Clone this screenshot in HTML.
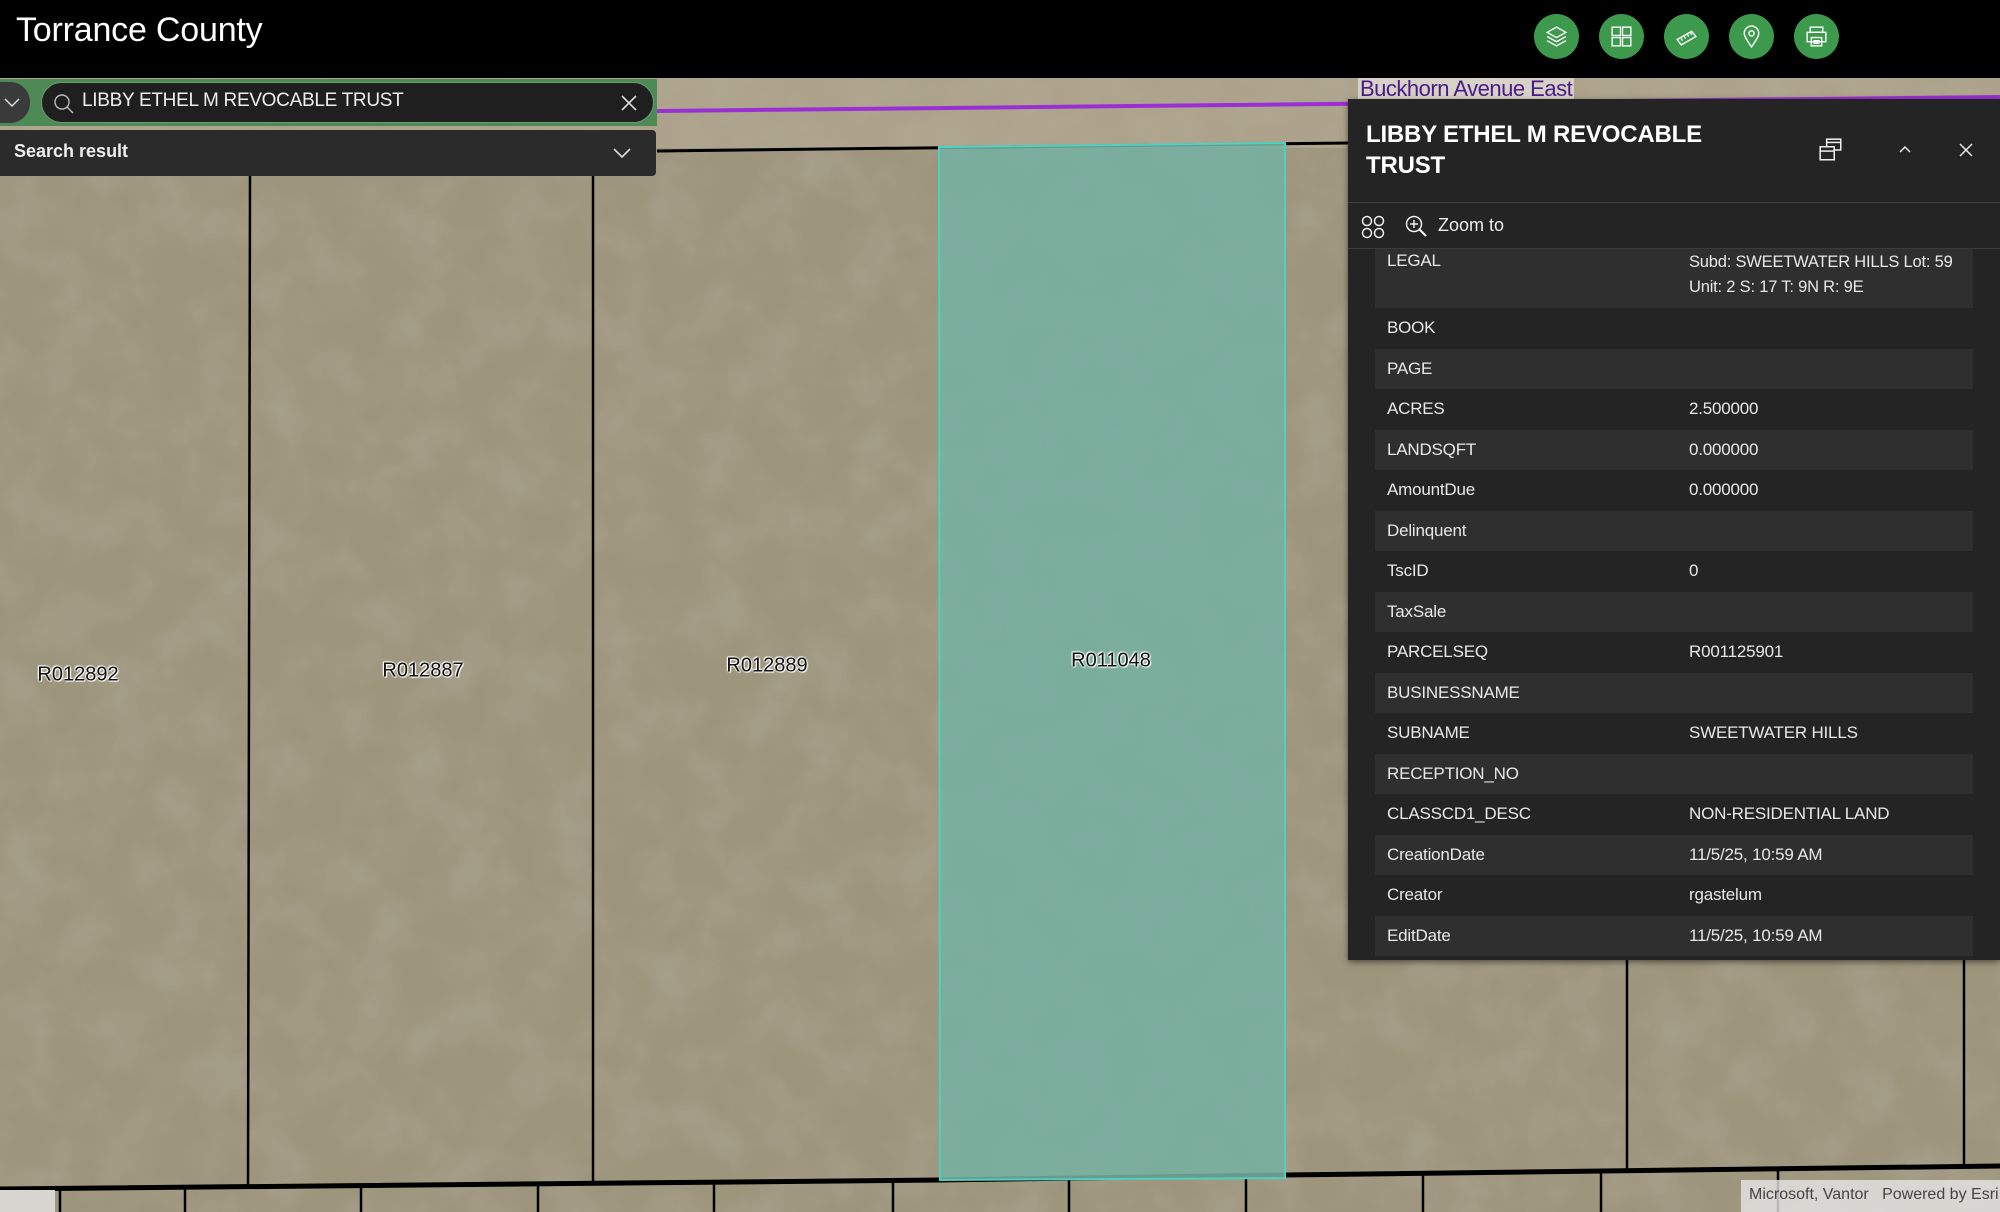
<!DOCTYPE html>
<html><head><meta charset="utf-8">
<style>
*{margin:0;padding:0;box-sizing:border-box}
body{width:2000px;height:1212px;overflow:hidden;position:relative;background:#9e957d;font-family:"Liberation Sans",sans-serif}
.abs{position:absolute}
#hdr{left:0;top:0;width:2000px;height:78px;background:#000}
#title{left:16px;top:11px;color:#fff;font-size:34px;letter-spacing:-0.2px}
.ic{position:absolute;top:14px;width:45px;height:45px;border-radius:50%;background:#3d9a4c}
.ic svg{position:absolute;left:10px;top:10px}
.lbl{position:absolute;font-size:20px;color:#111;text-shadow:0 0 2px #fff,0 0 2px #fff,1px 1px 1px #fff,-1px -1px 1px #fff;transform:translate(-50%,-50%)}
#panel{left:1348px;top:99px;width:652px;height:861px;background:#242424;overflow:hidden;box-shadow:0 2px 6px rgba(0,0,0,.5)}
.row{position:absolute;left:27px;width:598px;height:40.5px;color:#e8e8e8;font-size:17px;letter-spacing:-0.2px}
.row.s{background:#2f2f2f}
.row .k{position:absolute;left:12px;top:10px}
.row .v{position:absolute;left:314px;top:10px;white-space:nowrap}
</style></head><body>
<svg class="abs" style="left:0;top:0" width="2000" height="1212">
<defs>
<filter id="n"><feTurbulence type="fractalNoise" baseFrequency="0.02" numOctaves="3" seed="3"/><feColorMatrix values="0 0 0 0 0.45  0 0 0 0 0.43  0 0 0 0 0.35  0 0 0 1.2 -0.45"/></filter>
</defs>
<rect x="0" y="78" width="2000" height="1134" fill="#9e957d"/>
<rect x="0" y="78" width="2000" height="1134" filter="url(#n)" opacity="0.6"/>
<rect x="0" y="78" width="2000" height="70" fill="#b7ad96" opacity="0.6"/>
<polyline points="0,1189 940,1180 1285,1175 2000,1166" stroke="#000" stroke-width="5" fill="none"/>
<line x1="657" y1="151" x2="1348" y2="143" stroke="#000" stroke-width="3"/>
<line x1="657" y1="111" x2="2000" y2="97" stroke="#9b2fd6" stroke-width="4"/>
<g stroke="#000" stroke-width="2.5">
<line x1="250" y1="176" x2="248" y2="1188"/>
<line x1="593" y1="176" x2="593" y2="1184"/>
<line x1="1627" y1="960" x2="1627" y2="1172"/>
<line x1="1964" y1="960" x2="1964" y2="1168"/>
<line x1="60" y1="1189" x2="60" y2="1212"/><line x1="185" y1="1188" x2="185" y2="1212"/>
<line x1="361" y1="1186" x2="361" y2="1212"/><line x1="538" y1="1184" x2="538" y2="1212"/>
<line x1="714" y1="1182" x2="714" y2="1212"/><line x1="893" y1="1181" x2="893" y2="1212"/>
<line x1="1069" y1="1179" x2="1069" y2="1212"/><line x1="1246" y1="1176" x2="1246" y2="1212"/>
<line x1="1423" y1="1174" x2="1423" y2="1212"/><line x1="1601" y1="1172" x2="1601" y2="1212"/>
<line x1="1778" y1="1170" x2="1778" y2="1212"/>
</g>
<rect x="0" y="1190" width="55" height="22" fill="#d8d6d0"/>
<path d="M939,147 L1285,143 L1285,1178 L940,1180 Z" fill="#76b0a2" fill-opacity="0.88" stroke="#4fd0c0" stroke-width="2"/>
</svg>
<div class="lbl" style="left:78px;top:675px">R012892</div>
<div class="lbl" style="left:423px;top:671px">R012887</div>
<div class="lbl" style="left:767px;top:666px">R012889</div>
<div class="lbl" style="left:1111px;top:661px">R011048</div>
<div class="abs" style="left:1358px;top:76px;font-size:22px;color:#4a1a8a;background:rgba(255,255,255,.5);padding:0 2px;letter-spacing:-0.5px">Buckhorn Avenue East</div>

<div id="hdr" class="abs"></div>
<div id="title" class="abs">Torrance County</div>
<div class="ic" style="left:1534px"><svg width="25" height="25" viewBox="0 0 24 24" fill="none" stroke="#fff" stroke-width="1.3"><path d="M12 3 L21 8 L12 13 L3 8 Z"/><path d="M3 12 L12 17 L21 12"/><path d="M3 16 L12 21 L21 16"/></svg></div>
<div class="ic" style="left:1599px"><svg width="25" height="25" viewBox="0 0 24 24" fill="none" stroke="#fff" stroke-width="1.3"><rect x="3" y="3" width="8" height="8"/><rect x="13" y="3" width="8" height="8"/><rect x="3" y="13" width="8" height="8"/><rect x="13" y="13" width="8" height="8"/></svg></div>
<div class="ic" style="left:1664px"><svg width="25" height="25" viewBox="0 0 24 24" fill="none" stroke="#fff" stroke-width="1.3"><path d="M3 15 L17 7 L21 12 L7 20 Z"/><path d="M7 14 l1 2 M10 12 l1 2 M13 10 l1 2 M16 8.5 l1 2"/></svg></div>
<div class="ic" style="left:1729px"><svg width="25" height="25" viewBox="0 0 24 24" fill="none" stroke="#fff" stroke-width="1.3"><path d="M12 22 C8 16 5 12 5 9 A7 7 0 0 1 19 9 C19 12 16 16 12 22 Z"/><circle cx="12" cy="9" r="2.5"/></svg></div>
<div class="ic" style="left:1794px"><svg width="25" height="25" viewBox="0 0 24 24" fill="none" stroke="#fff" stroke-width="1.3"><rect x="6" y="3" width="12" height="5"/><rect x="3" y="8" width="18" height="9"/><rect x="7" y="13" width="10" height="8"/><path d="M9 16 h6 M9 18.5 h6"/></svg></div>

<div class="abs" style="left:0;top:79px;width:657px;height:47px;background:#4d8a55"></div>
<div class="abs" style="left:0;top:82px;width:30px;height:41px;background:#3a3a3a;border-radius:0 20px 20px 0"></div>
<svg class="abs" style="left:3px;top:95px" width="18" height="14" viewBox="0 0 18 14"><path d="M2 4 L9 11 L16 4" stroke="#ddd" stroke-width="1.5" fill="none"/></svg>
<div class="abs" style="left:41px;top:82px;width:613px;height:41px;background:#1f1f1f;border:1px solid #6a9a70;border-radius:21px"></div>
<svg class="abs" style="left:52px;top:92px" width="24" height="24" viewBox="0 0 24 24"><circle cx="10" cy="10" r="7" stroke="#bbb" stroke-width="1.4" fill="none"/><path d="M15 15 L21 21" stroke="#bbb" stroke-width="1.4"/></svg>
<div class="abs" style="left:82px;top:90px;color:#eee;font-size:19px;letter-spacing:-0.3px">LIBBY ETHEL M REVOCABLE TRUST</div>
<svg class="abs" style="left:619px;top:93px" width="20" height="20" viewBox="0 0 20 20"><path d="M3 3 L17 17 M17 3 L3 17" stroke="#ddd" stroke-width="1.6"/></svg>
<div class="abs" style="left:0;top:130px;width:656px;height:46px;background:#2b2b2b;border-radius:0 4px 4px 0"></div>
<div class="abs" style="left:14px;top:141px;color:#eee;font-size:18px;font-weight:bold">Search result</div>
<svg class="abs" style="left:612px;top:146px" width="20" height="14" viewBox="0 0 20 14"><path d="M2 3 L10 11 L18 3" stroke="#ddd" stroke-width="1.6" fill="none"/></svg>

<div id="panel" class="abs">
<div class="abs" style="left:18px;top:20px;color:#fff;font-size:24px;font-weight:bold;line-height:31px;letter-spacing:-0.2px">LIBBY ETHEL M REVOCABLE<br>TRUST</div>
<svg class="abs" style="left:470px;top:38px" width="26" height="26" viewBox="0 0 24 24" fill="none" stroke="#eee" stroke-width="1.4"><rect x="8" y="2" width="13" height="10"/><path d="M8 5 h13"/><rect x="2" y="9" width="13" height="12" fill="#242424"/><path d="M2 13 h13"/></svg>
<svg class="abs" style="left:549px;top:44px" width="16" height="12" viewBox="0 0 16 12"><path d="M3 9 L8 4 L13 9" stroke="#eee" stroke-width="1.5" fill="none"/></svg>
<svg class="abs" style="left:610px;top:43px" width="16" height="16" viewBox="0 0 16 16"><path d="M2 2 L14 14 M14 2 L2 14" stroke="#eee" stroke-width="1.5"/></svg>
<div class="abs" style="left:0;top:103px;width:652px;height:1px;background:#3c3c3c"></div>
<svg class="abs" style="left:12px;top:115px" width="26" height="26" viewBox="0 0 26 26" fill="none" stroke="#eee" stroke-width="1.5"><circle cx="7" cy="7" r="4.5"/><circle cx="19" cy="7" r="4.5"/><circle cx="7" cy="19" r="4.5"/><circle cx="19" cy="19" r="4.5"/></svg>
<svg class="abs" style="left:56px;top:115px" width="26" height="26" viewBox="0 0 26 26" fill="none" stroke="#eee" stroke-width="1.5"><circle cx="10" cy="10" r="7.5"/><path d="M10 6 v8 M6 10 h8"/><path d="M15.5 15.5 L22 22" stroke-width="2.2"/></svg>
<div class="abs" style="left:90px;top:116px;color:#eee;font-size:18px">Zoom to</div>
<div class="abs" style="left:0;top:149px;width:652px;height:1px;background:#3c3c3c"></div>

<div class="row s" style="top:150px;height:59px"><span class="k" style="top:2px">LEGAL</span><span class="v" style="line-height:25px;top:1px;font-size:16.5px">Subd: SWEETWATER HILLS Lot: 59<br>Unit: 2 S: 17 T: 9N R: 9E</span></div>
<div class="row" style="top:209px"><span class="k">BOOK</span></div>
<div class="row s" style="top:249.5px"><span class="k">PAGE</span></div>
<div class="row" style="top:290px"><span class="k">ACRES</span><span class="v">2.500000</span></div>
<div class="row s" style="top:330.5px"><span class="k">LANDSQFT</span><span class="v">0.000000</span></div>
<div class="row" style="top:371px"><span class="k">AmountDue</span><span class="v">0.000000</span></div>
<div class="row s" style="top:411.5px"><span class="k">Delinquent</span></div>
<div class="row" style="top:452px"><span class="k">TscID</span><span class="v">0</span></div>
<div class="row s" style="top:492.5px"><span class="k">TaxSale</span></div>
<div class="row" style="top:533px"><span class="k">PARCELSEQ</span><span class="v">R001125901</span></div>
<div class="row s" style="top:573.5px"><span class="k">BUSINESSNAME</span></div>
<div class="row" style="top:614px"><span class="k">SUBNAME</span><span class="v">SWEETWATER HILLS</span></div>
<div class="row s" style="top:654.5px"><span class="k">RECEPTION_NO</span></div>
<div class="row" style="top:695px"><span class="k">CLASSCD1_DESC</span><span class="v">NON-RESIDENTIAL LAND</span></div>
<div class="row s" style="top:735.5px"><span class="k">CreationDate</span><span class="v">11/5/25, 10:59 AM</span></div>
<div class="row" style="top:776px"><span class="k">Creator</span><span class="v">rgastelum</span></div>
<div class="row s" style="top:816.5px"><span class="k">EditDate</span><span class="v">11/5/25, 10:59 AM</span></div>
</div>

<div class="abs" style="left:1741px;top:1180px;width:259px;height:32px;background:rgba(230,230,230,.8);color:#444;font-size:16px;padding:6px 8px;white-space:nowrap;overflow:hidden">Microsoft, Vantor &nbsp; Powered by Esri</div>
</body></html>
